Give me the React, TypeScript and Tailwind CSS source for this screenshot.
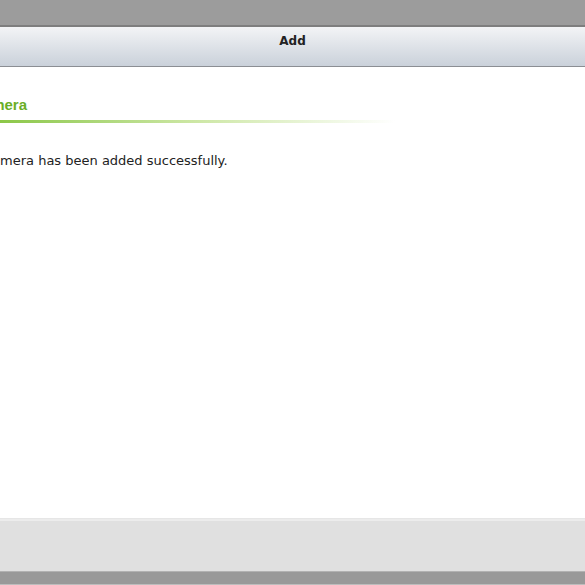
export default function App() {
  return (
    <div className="flex h-[585px] w-[585px] flex-col overflow-hidden bg-[#9b9b9b] font-['DejaVu_Sans',sans-serif]">
      <div className="h-[25px] shrink-0 bg-[#9c9c9c]" />
      <div className="h-[2px] shrink-0 bg-[#7e7e7e]" />

      <div className="flex h-[40px] shrink-0 justify-center border-b border-[#8b8e93] bg-gradient-to-b from-[#f3f4f6] to-[#cad1da] pt-[7px]">
        <span className="text-[12px] font-bold leading-[14px] text-[#222]">Add</span>
      </div>

      <div className="flex-1 bg-white">
        <div className="ml-[-17px] pt-[29px]">
          <h2 className="ml-[-11px] font-['Liberation_Sans',sans-serif] text-[15px] font-bold leading-[18px] text-[#6aae27]">
            Camera
          </h2>
          <div className="mt-[6px] h-[3px] w-[412px] bg-gradient-to-r from-[#86c43c] via-[#cbe6a2] to-transparent" />
          <p className="mt-[30px] text-[13px] leading-[16px] text-[#222]">
            Camera has been added successfully.
          </p>
        </div>
      </div>

      <div className="flex h-[54px] shrink-0 flex-col border-t border-[#e6e6e6] bg-[#e0e0e0]">
        <div className="h-[2px] bg-[#ececec]" />
        <div className="flex-1" />
        <div className="h-px bg-[#b2b2b2]" />
      </div>

      <div className="h-[12px] shrink-0 bg-[#999]" />
      <div className="h-px shrink-0 bg-[#bdbdbd]" />
    </div>
  )
}
